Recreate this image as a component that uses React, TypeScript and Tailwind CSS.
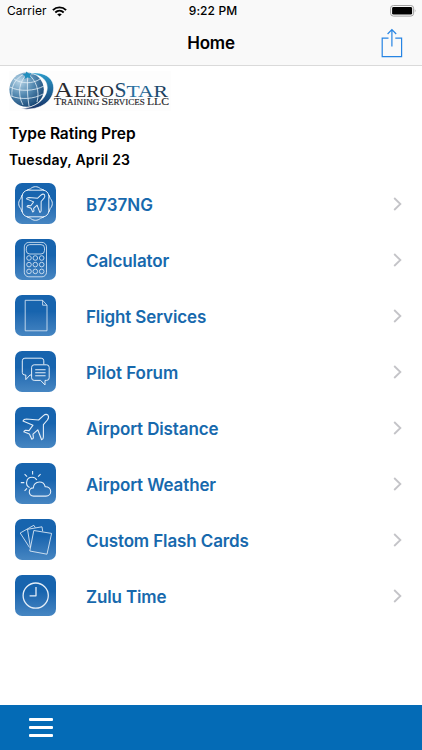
import type { ReactNode } from "react";

interface MenuItem {
  title: string;
  tracking: string;
  icon: ReactNode;
}

const planePath =
  "M33 8.2 C31.6 7 29.6 7.6 28.4 8.6 L23.6 13 L11.4 12 C10 12 8.4 12.8 8 14 L18 18.2 L14 23.6 L10.4 23.2 C9.6 23.4 9 24 8.8 24.8 L14.4 27 L16.8 32.2 C17.8 32 18.4 31.4 18.4 30.6 L18 27.2 L22.8 22.8 L26.6 32.8 C27.6 32.4 28.4 31.4 28.4 30 L28.4 17.6 L32.4 13 C33.4 11.6 34 9.6 33 8.2 Z";

const keys = [
  [14, 19], [20.3, 19], [26.7, 19],
  [14, 25.6], [20.3, 25.6], [26.7, 25.6],
  [14, 32.4], [20.3, 32.4], [26.7, 32.4],
];

const menuItems: MenuItem[] = [
  {
    title: "B737NG",
    tracking: "tracking-[0px]",
    icon: (
      <>
        <rect x="7.2" y="7.2" width="26.6" height="26.6" rx="6" />
        <path d="M12 7 L15.5 5.8 C18 3 23 3 25.5 5.8 L29 7 M12 34 L15.5 35.2 C18 38 23 38 25.5 35.2 L29 34 M7 12 L5.8 15.5 C3 18 3 23 5.8 25.5 L7 29 M34 12 L35.2 15.5 C38 18 38 23 35.2 25.5 L34 29" />
        <path d={planePath} transform="translate(5.7 5.8) scale(0.72)" strokeWidth="1.4" />
      </>
    ),
  },
  {
    title: "Calculator",
    tracking: "tracking-[-0.1px]",
    icon: (
      <g strokeWidth="0.8">
        <rect x="9.3" y="3.4" width="22.2" height="34.4" rx="4.5" />
        <rect x="11.3" y="5.6" width="18.2" height="9.4" rx="3.5" />
        {keys.map(([x, y]) => (
          <circle key={`${x}-${y}`} cx={x} cy={y} r="2.3" />
        ))}
      </g>
    ),
  },
  {
    title: "Flight Services",
    tracking: "tracking-[-0.13px]",
    icon: <path d="M10.2 5.3 H27.6 L32 10.2 V35.8 H10.2 Z M27.6 5.3 V10.2 H32" strokeWidth="0.8" />,
  },
  {
    title: "Pilot Forum",
    tracking: "tracking-[-0.05px]",
    icon: (
      <>
        <path d="M28.8 13.4 V9.8 Q28.8 7.2 26.2 7.2 H9.9 Q7.3 7.2 7.3 9.8 V21.4 Q7.3 24 9.9 24 H10.8 V28.6 L15 24 H16.5" />
        <path d="M19.2 13.8 H31.6 Q34.2 13.8 34.2 16.4 V26.8 Q34.2 29.4 31.6 29.4 H30 V34 L25.6 29.4 H19.2 Q16.6 29.4 16.6 26.8 V16.4 Q16.6 13.8 19.2 13.8 Z" />
        <path d="M20.2 18.8 H30.6 M20.2 21.8 H30.6 M20.2 24.8 H30.6" strokeWidth="1.1" />
      </>
    ),
  },
  {
    title: "Airport Distance",
    tracking: "tracking-[-0.12px]",
    icon: <path d={planePath} strokeWidth="1.1" />,
  },
  {
    title: "Airport Weather",
    tracking: "tracking-[-0.12px]",
    icon: (
      <>
        <path d="M18.6 33.1 C15.8 33.1 14.3 31 14.3 28.9 C14.3 26.5 16.2 24.9 18.3 24.9 C18.4 21.5 21 19 24.3 19 C27.3 19 29.6 20.8 30.2 23.8 C33.2 23.6 35.7 25.5 35.7 28.5 C35.7 31 33.8 33.1 31 33.1 Z" strokeWidth="1.1" />
        <path d="M14.6 24.6 C12.4 23.4 11.3 21.4 11.6 19.2 C12 16.4 14.3 14.3 17.1 14.3 C19 14.3 20.8 15.3 21.8 17" strokeWidth="1.1" />
        <path d="M17.6 8 V11.5 M9.6 11.2 L12.1 13.7 M25.6 11.2 L23.1 13.7 M5.8 19.6 H9.3 M9.6 27.8 L12 25.4" strokeWidth="1.1" />
      </>
    ),
  },
  {
    title: "Custom Flash Cards",
    tracking: "tracking-[-0.12px]",
    icon: (
      <g strokeWidth="0.85">
        <path d="M18.8 11.5 L36.6 14.4 L32 35.2 L14.8 32 Z" />
        <path d="M15.4 28.2 L12.5 10.3 L27 7.8 L27.7 12.3" />
        <path d="M14.6 28.6 L5.2 14 L18.8 6.3 L20.3 8.6" />
      </g>
    ),
  },
  {
    title: "Zulu Time",
    tracking: "tracking-[-0.15px]",
    icon: (
      <>
        <circle cx="20.7" cy="20.6" r="12.6" strokeWidth="1.3" />
        <path d="M21 12 V20.8 H14.6" strokeWidth="1.3" />
      </>
    ),
  },
];

function StatusBar() {
  return (
    <div className="flex h-[21px] items-center justify-between pt-px pl-[7px] pr-[5px] text-[12px]">
      <div className="flex w-[124px] items-center gap-[5px]">
        <span className="tracking-[0.05px]">Carrier</span>
        <svg width="15" height="11" viewBox="0 0 15 11" fill="none" stroke="#000" strokeWidth="1.9">
          <path d="M0.9 4.1 C4.6 0.4 10.4 0.4 14.1 4.1" />
          <path d="M3.3 6.5 C5.7 4.2 9.3 4.2 11.7 6.5" />
          <path d="M7.5 10.6 L5.2 8.3 C6.5 7.1 8.5 7.1 9.8 8.3 Z" fill="#000" stroke="none" />
        </svg>
      </div>
      <span className="font-medium tracking-[0.1px]">9:22 PM</span>
      <div className="flex w-[122px] justify-end">
        <svg width="27" height="12" viewBox="0 0 27 12">
          <rect x="0.6" y="0.5" width="23" height="10.6" rx="2.8" fill="none" stroke="#a0a0a0" />
          <rect x="2.1" y="2" width="20" height="7.6" rx="1.4" fill="#000" />
          <path d="M24.8 4 Q26.4 5.8 24.8 7.6 Z" fill="#a0a0a0" />
        </svg>
      </div>
    </div>
  );
}

function Logo() {
  return (
    <svg width="162" height="40" viewBox="0 0 162 40" className="block">
      <defs>
        <radialGradient id="globe" cx="0.3" cy="0.25" r="0.85">
          <stop offset="0" stopColor="#b9d6e8" />
          <stop offset="0.5" stopColor="#5288b0" />
          <stop offset="1" stopColor="#12406f" />
        </radialGradient>
        <linearGradient id="swoosh" x1="0" y1="0" x2="0" y2="1">
          <stop offset="0" stopColor="#2a9bcb" />
          <stop offset="1" stopColor="#173368" />
        </linearGradient>
        <linearGradient id="star" gradientUnits="userSpaceOnUse" x1="106" y1="0" x2="159" y2="0">
          <stop offset="0" stopColor="#173a5c" />
          <stop offset="0.4" stopColor="#2879ac" />
          <stop offset="1" stopColor="#16334f" />
        </linearGradient>
      </defs>
      <rect width="162" height="40" fill="#fdfdfd" />
      <circle cx="17.6" cy="18.6" r="17.2" fill="url(#globe)" />
      <g fill="none" stroke="#e4f0f7" strokeWidth="0.8">
        <path d="M19 3 C10 9 8 23 14 34 M19 3 C18 12 18 24 20 35 M19 3 C27 9 31 20 28 31 M15 3 C6 8 2 15 3 25" />
        <path d="M5 8 C12 13 24 13 31 8 M1 16 C10 21 26 20 35 15 M2 25 C12 29 25 28 34 23" />
      </g>
      <path d="M20 2.5 C36 -0.5 46 8 44.5 19 C43 32 29 40 12 37.8 C26 36.6 36.4 29 38 19 C39.4 10 33 3.5 20 2.5 Z" fill="url(#swoosh)" stroke="#fdfdfd" strokeWidth="0.6" />
      <path d="M17.5 0.5 L19.4 2.6 L22.5 2 L20.8 4.5 L22 7.3 L18.4 6.4 L15.5 8 L16 5 L13.2 3 L16.5 2.7 Z" fill="#208ebd" />
      <g fontFamily="Liberation Serif, serif" fill="#29292d">
        <text x="45" y="25.7" fontSize="20.5" textLength="19" lengthAdjust="spacingAndGlyphs">A</text>
        <text x="65" y="25.7" fontSize="15.8" textLength="40" lengthAdjust="spacingAndGlyphs">ERO</text>
        <text x="105.5" y="25.7" fontSize="21" textLength="12" lengthAdjust="spacingAndGlyphs" fill="url(#star)">S</text>
        <text x="117.5" y="25.7" fontSize="15.8" textLength="41.5" lengthAdjust="spacingAndGlyphs" fill="url(#star)">TAR</text>
        <text x="45" y="34.4" fontSize="7.6" textLength="115" lengthAdjust="spacingAndGlyphs" stroke="#29292d" strokeWidth="0.15">
          <tspan fontSize="9.8">T</tspan>RAINING <tspan fontSize="9.8">S</tspan>ERVICES <tspan fontSize="9.8">LLC</tspan>
        </text>
      </g>
    </svg>
  );
}

export default function App() {
  return (
    <div className="flex h-[750px] w-[422px] flex-col bg-white font-['Inter',sans-serif] text-black">
      <header className="h-[66px] border-b border-[#dadada] bg-[#f9f9f9]">
        <StatusBar />
        <div className="grid h-[44px] grid-cols-[1fr_auto_1fr] items-center">
          <span></span>
          <h1 className="pt-[2px] text-[17px] font-semibold tracking-[-0.2px]">Home</h1>
          <button className="mr-[19px] justify-self-end">
            <svg width="22" height="30" viewBox="0 0 22 30" fill="none" stroke="#2684e3" strokeWidth="1.2" className="block">
              <path d="M7.5 10.2 H1.2 V28.6 H20.6 V10.2 H14.3" />
              <path d="M10.9 18.4 V2 M6.6 6 L10.9 1.6 L15.2 6" />
            </svg>
          </button>
        </div>
      </header>

      <main className="flex-1 pt-[5px]">
        <div className="pl-[9px]">
          <Logo />
        </div>
        <div className="pt-[13px] pl-[9px] font-semibold">
          <h2 className="h-[20px] text-[15.5px] leading-[20px] tracking-[-0.05px]">Type Rating Prep</h2>
          <p className="mt-[7px] h-[18px] text-[14px] leading-[18px] tracking-[0.2px]">Tuesday, April 23</p>
        </div>

        <ul className="mt-[6px]">
          {menuItems.map((item) => (
            <li key={item.title} className="flex h-[56px] items-center pr-[20px] pl-[15px]">
              <span className="h-[41px] w-[41px] overflow-hidden rounded-[7px] bg-linear-to-b from-[#1764ae] from-40% to-[#4686c2]">
                <svg width="41" height="41" viewBox="0 0 41 41" fill="none" stroke="#e3edf7" strokeWidth="1" strokeLinejoin="round">
                  {item.icon}
                </svg>
              </span>
              <span className={`ml-[30px] flex-1 pt-[5px] text-[17px] font-semibold text-[#1769ad] ${item.tracking}`}>
                {item.title}
              </span>
              <svg width="9" height="14" viewBox="0 0 9 14" fill="none" stroke="#c4c4c8" strokeWidth="1.8" className="mt-[2px]">
                <path d="M1.2 1 L7.4 7 L1.2 13" />
              </svg>
            </li>
          ))}
        </ul>
      </main>

      <footer className="flex h-[45px] items-center bg-[#046bb6] pl-[29px]">
        <button className="flex flex-col gap-[5px]">
          <span className="h-[3px] w-[24px] rounded-[1px] bg-white"></span>
          <span className="h-[3px] w-[24px] rounded-[1px] bg-white"></span>
          <span className="h-[3px] w-[24px] rounded-[1px] bg-white"></span>
        </button>
      </footer>
    </div>
  );
}
